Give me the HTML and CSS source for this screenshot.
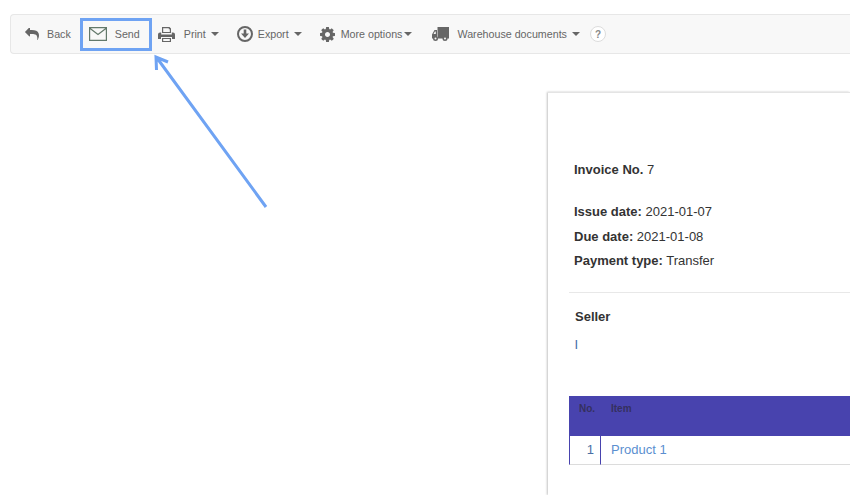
FILE: index.html
```html
<!DOCTYPE html>
<html lang="en">
<head>
<meta charset="utf-8">
<title>Invoice</title>
<link rel="stylesheet" href="styles.css">
</head>
<body>
<div class="toolbar">
  <a class="tool tool-back">
    <svg class="icon ic-back" viewBox="0 128 1792 1536"><path d="M1792 1120q0 166-127 451-3 7-10.5 24t-13.5 30-13 22q-12 17-28 17-15 0-23.5-10t-8.5-25q0-9 2.5-26.5t2.5-23.5q5-68 5-123 0-101-17.5-181t-48.5-138.5-80-101-105.5-69.5-133-42.5-154-21.5-175.5-6h-224v256q0 26-19 45t-45 19-45-19l-512-512q-19-19-19-45t19-45l512-512q19-19 45-19t45 19 19 45v256h224q713 0 875 403 53 134 53 333z"/></svg>
    <span>Back</span>
  </a>
  <a class="tool tool-send">
    <svg class="ic-send" viewBox="0 0 18 14"><path class="line" d="M.6.6h16.8v12.8H.6zM.8 1.2 9 7.500l8.2-6.300"/></svg>
    <span>Send</span>
  </a>
  <a class="tool tool-print">
    <svg class="icon ic-print" viewBox="0 0 17 15"><path d="M4 0h7.5L13 1.5V6H4zM5.2 1.2v3.9h6.6V2.2h-1V1.2z" fill-rule="evenodd"/><path d="M2 5.500h1.200V7.500h10.600V5.500H15a2 2 0 0 1 2 2V12h-3v-2H3v2H0V7.500a2 2 0 0 1 2-2z"/><path d="M4 11h9v4H4zM5.200 12v2h6.600v-2z" fill-rule="evenodd"/></svg>
    <span>Print</span><i class="caret"></i>
  </a>
  <a class="tool tool-export">
    <svg class="icon ic-export" viewBox="0 0 16 16"><path fill-rule="evenodd" d="M8 0a8 8 0 1 1 0 16A8 8 0 0 1 8 0zm0 2a6 6 0 1 0 0 12A6 6 0 0 0 8 2z"/><path d="M6.700 3.500h2.600v4H12L8 12 4 7.500h2.700z"/></svg>
    <span>Export</span><i class="caret"></i>
  </a>
  <a class="tool tool-more">
    <svg class="icon ic-gear" viewBox="128 128 1536 1536"><path d="M1152 896q0-106-75-181t-181-75-181 75-75 181 75 181 181 75 181-75 75-181zm512-109v222q0 12-8 23t-20 13l-185 28q-19 54-39 91 35 50 107 138 10 12 10 25t-9 23q-27 37-99 108t-94 71q-12 0-26-9l-138-108q-44 23-91 38-16 136-29 186-7 28-36 28h-222q-14 0-24.500-8.500t-11.500-21.500l-28-184q-49-16-90-37l-141 107q-10 9-25 9-14 0-25-11-126-114-165-168-7-10-7-23 0-12 8-23 15-21 51-66.500t54-70.500q-27-50-41-99l-183-27q-13-2-21-12.500t-8-23.500v-222q0-12 8-23t19-13l186-28q14-46 39-92-40-57-107-138-10-12-10-24 0-10 9-23 26-36 98.500-107.500t94.500-71.500q13 0 26 10l138 107q44-23 91-38 16-136 29-186 7-28 36-28h222q14 0 24.500 8.500t11.500 21.500l28 184q49 16 90 37l142-107q9-9 24-9 13 0 25 10 129 119 165 170 7 8 7 22 0 12-8 23-15 21-51 66.500t-54 70.500q26 50 41 98l183 28q13 2 21 12.500t8 23.500z"/></svg>
    <span>More options</span><i class="caret"></i>
  </a>
  <a class="tool tool-wh">
    <svg class="icon ic-truck" viewBox="0 0 17 14"><path d="M5.500 0H17v11.500H5.500z"/><path d="M5 3v8.500H0V7.500L2.500 3zM1.500 7h2.300V4.400H2.900z" fill-rule="evenodd"/><circle cx="3.500" cy="11.500" r="2.500"/><circle cx="13" cy="11.500" r="2.500"/><circle cx="3.500" cy="11.500" r="1" fill="#f8f8f8"/><circle cx="13" cy="11.500" r="1" fill="#f8f8f8"/></svg>
    <span>Warehouse documents</span><i class="caret"></i>
  </a>
  <span class="help">?</span>
</div>

<svg class="arrow" viewBox="0 0 130 170" width="130" height="170"><path d="M126 163 17 14M16.500 26 16 13 28 18"/></svg>

<main class="sheet">
  <p class="invoice-no"><b>Invoice No.</b> 7</p>
  <p class="meta meta-first"><b>Issue date:</b> 2021-01-07</p>
  <p class="meta"><b>Due date:</b> 2021-01-08</p>
  <p class="meta"><b>Payment type:</b> Transfer</p>
  <hr class="rule">
  <h2 class="seller">Seller</h2>
  <p class="seller-name">I</p>
  <table class="items">
    <thead><tr><th class="col-no">No.</th><th class="col-item">Item</th></tr></thead>
    <tbody><tr><td class="cell-no">1</td><td class="cell-item">Product 1</td></tr></tbody>
  </table>
</main>
</body>
</html>
```

FILE: styles.css
```css
* { box-sizing: border-box; }
html, body { margin: 0; height: 495px; overflow: hidden; background: #fff; }
body {
  width: 850px;
  padding: 14px 0 0 10px;
  position: relative;
  font-family: "Liberation Sans", Arial, sans-serif;
  font-size: 13px;
  color: #333;
}
.toolbar {
  display: flex;
  align-items: center;
  height: 40px;
  padding-left: 14px;
  background: #f8f8f8;
  border: 1px solid #e7e7e7;
  border-right: 0;
  border-radius: 4px 0 0 4px;
  font-size: 10.7px;
  color: #666;
}
.tool { display: flex; align-items: center; }
.icon { fill: #666; display: block; flex: none; }
.ic-back { width: 14px; height: 12px; margin-right: 8px; }
.tool-send {
  width: 72px;
  height: 33px;
  margin: 0 6px 0 9px;
  padding-left: 6px;
  border: 3px solid #6fa3f3;
}
.ic-send { width: 18px; height: 14px; margin-right: 8px; flex: none; }
.line { fill: none; stroke: #62786a; stroke-width: 1.2; }
.ic-print { width: 17px; height: 15px; margin-right: 9px; }
.caret {
  width: 0;
  height: 0;
  margin-left: 5px;
  border-top: 4px solid #666;
  border-left: 4px solid transparent;
  border-right: 4px solid transparent;
}
.tool-export { margin-left: 18px; }
.ic-export { width: 16px; height: 16px; margin-right: 5px; }
.tool-more { margin-left: 18px; }
.ic-gear { width: 15px; height: 15px; margin-right: 6px; }
.tool-more .caret { margin-left: 2px; }
.tool-wh { margin-left: 20px; }
.ic-truck { width: 17px; height: 14px; margin-right: 8px; }
.help {
  width: 16px;
  height: 16px;
  margin-left: 10px;
  border: 1px solid #ddd;
  border-radius: 50%;
  background: #fff;
  font-size: 10px;
  font-weight: bold;
  line-height: 16px;
  text-align: center;
  color: #888;
}
.arrow { position: absolute; left: 140px; top: 44px; }
.arrow path { fill: none; stroke: #6fa3f3; stroke-width: 3; }
.sheet {
  width: 302px;
  height: 403px;
  margin: 38px 0 0 538px;
  padding: 68px 0 0 21px;
  background: #fff;
  border-top: 1px solid #e4e4e4;
  box-shadow: -1px 0 2px #c4c4c4;
}
.sheet p { margin: 0; }
.invoice-no { height: 17px; line-height: 17px; padding-left: 5px; }
.meta { height: 24.500px; line-height: 24px; padding-left: 5px; }
.meta-first { margin-top: 22px !important; }
.rule { height: 1px; margin: 18px 0 0; border: 0; background: #e8e8e8; }
.seller { margin: 15px 0 0 6px; font-size: 13px; line-height: 17px; color: #333; }
.seller-name { margin: 11px 0 0 5.500px !important; line-height: 17px; color: #3f6ea8; }
.items { width: 281px; margin-top: 43px; border-collapse: separate; border-spacing: 0; table-layout: fixed; }
.items thead tr { height: 40px; background: #4843ae; }
.items th {
  padding: 6px 0 0;
  vertical-align: top;
  font-size: 10px;
  line-height: 13px;
  text-align: left;
  color: #35305f;
}
.col-no { width: 32px; padding-left: 10px !important; }
.col-item { padding-left: 10px !important; }
.items tbody tr { height: 29px; }
.items td { border-bottom: 1px solid #dcdcdc; }
.cell-no { padding: 0 6px 0 0; text-align: right; border-left: 1px solid #4843ae; border-right: 1px solid #4843ae; color: #4a6fa5; }
.cell-item { padding: 0 0 0 10px; color: #5b8fd0; }
```
